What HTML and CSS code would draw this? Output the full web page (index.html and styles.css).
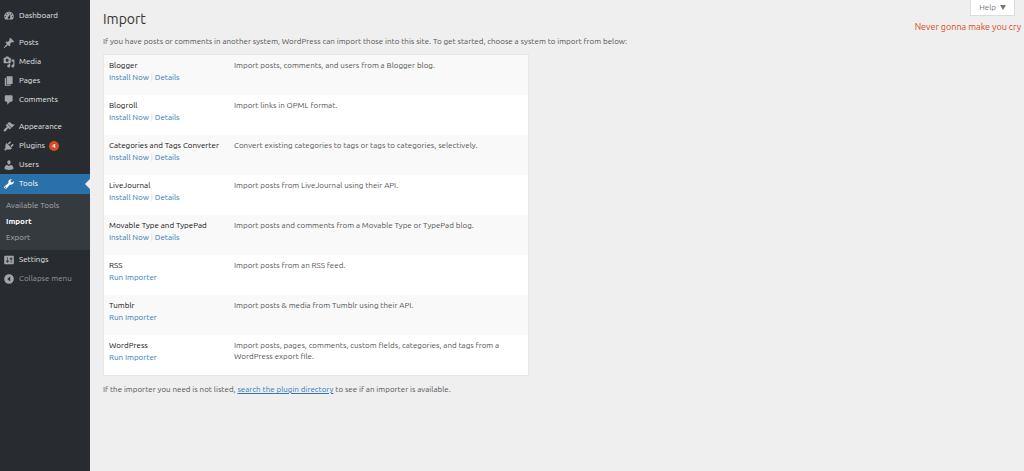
FILE: index.html
```html
<!DOCTYPE html>
<html lang="en">
<head>
  <meta charset="utf-8">
  <title>Import</title>
  <link rel="stylesheet" href="styles.css">
</head>
<body>

  <nav class="admin-menu">
    <ul class="menu">
      <li><a href="#"><svg viewBox="0 0 20 20"><path d="M3.76 16h12.48c1.1-1.37 1.76-3.11 1.76-5 0-4.42-3.58-8-8-8s-8 3.58-8 8c0 1.89.66 3.63 1.76 5zM10 4c.55 0 1 .45 1 1s-.45 1-1 1-1-.45-1-1 .45-1 1-1zM6 6c.55 0 1 .45 1 1s-.45 1-1 1-1-.45-1-1 .45-1 1-1zm8 0c.55 0 1 .45 1 1s-.45 1-1 1-1-.45-1-1 .45-1 1-1zm-5.37 5.55L12 7v6c0 1.1-.9 2-2 2s-2-.9-2-2c0-.57.24-1.08.63-1.45zM4 10c.55 0 1 .45 1 1s-.45 1-1 1-1-.45-1-1 .45-1 1-1zm12 0c.55 0 1 .45 1 1s-.45 1-1 1-1-.45-1-1 .45-1 1-1z"/></svg>Dashboard</a></li>
      <li class="separator"></li>
      <li><a href="#"><svg viewBox="0 0 20 20"><path d="M10.44 3.02l1.82-1.82 6.36 6.35-1.83 1.82c-1.05-.68-2.48-.57-3.41.36l-.75.75c-.92.93-1.04 2.35-.35 3.41l-1.83 1.82-2.41-2.41-2.8 2.79c-.42.42-3.38 2.71-3.8 2.29s1.86-3.39 2.28-3.81l2.79-2.79L4.1 9.36l1.83-1.82c1.05.69 2.48.57 3.4-.36l.75-.75c.93-.92 1.05-2.35.36-3.41z"/></svg>Posts</a></li>
      <li><a href="#"><svg viewBox="0 0 20 20"><path d="M13 11V4c0-.55-.45-1-1-1h-1.67L9 1H5L3.67 3H2c-.55 0-1 .45-1 1v7c0 .55.45 1 1 1h10c.55 0 1-.45 1-1zM7 4.5c1.38 0 2.5 1.12 2.5 2.5S8.38 9.5 7 9.5 4.5 8.38 4.5 7 5.62 4.5 7 4.5zM14 6h5v10.5c0 1.38-1.12 2.5-2.5 2.5S14 17.88 14 16.5s1.12-2.5 2.5-2.5c.17 0 .34.02.5.05V9h-3V6zm-4 8.05V13h2v3.5c0 1.38-1.12 2.5-2.5 2.5S7 17.88 7 16.5 8.12 14 9.5 14c.17 0 .34.02.5.05z"/></svg>Media</a></li>
      <li><a href="#"><svg viewBox="0 0 20 20"><path d="M6 15V2h10v13H6zm-1 1h8v2H3V5h2v11z"/></svg>Pages</a></li>
      <li><a href="#"><svg viewBox="0 0 20 20"><path d="M5 2h9c1.1 0 2 .9 2 2v7c0 1.1-.9 2-2 2h-2l-5 5v-5H5c-1.1 0-2-.9-2-2V4c0-1.1.9-2 2-2z"/></svg>Comments</a></li>
      <li class="separator"></li>
      <li><a href="#"><svg viewBox="0 0 20 20"><path d="M14.48 11.06L7.41 3.99l1.5-1.5c.5-.56 2.3-.47 3.51.32 1.21.8 1.43 1.28 2.91 2.1 1.18.64 2.45 1.26 4.45.85zm-.71.71L6.7 4.7 4.93 6.47c-.39.39-.39 1.02 0 1.41l1.06 1.06c.39.39.39 1.03 0 1.42-.6.6-1.43 1.11-2.21 1.69-.35.26-.7.53-1.01.84C1.43 14.23.4 16.08 1.4 17.07c.99 1 2.84-.03 4.18-1.36.31-.31.58-.66.85-1.02.57-.78 1.08-1.61 1.69-2.21.39-.39 1.02-.39 1.41 0l1.06 1.06c.39.39 1.02.39 1.41 0z"/></svg>Appearance</a></li>
      <li><a href="#"><svg viewBox="0 0 20 20"><path d="M13.11 4.36L9.87 7.6 8 5.73l3.24-3.24c.35-.34 1.05-.2 1.56.32.52.51.66 1.21.31 1.55zm-8 1.77l.91-1.12 9.01 9.01-1.19.84c-.71.71-2.63 1.16-3.82 1.16H6.14L4.9 17.26c-.59.59-1.54.59-2.12 0-.59-.58-.59-1.53 0-2.12l1.24-1.24v-3.88c0-1.13.4-3.19 1.09-3.89zm7.26 3.97l3.24-3.24c.34-.35 1.04-.21 1.55.31.52.51.66 1.21.31 1.55l-3.24 3.25z"/></svg>Plugins <span class="count">4</span></a></li>
      <li><a href="#"><svg viewBox="0 0 20 20"><path d="M10 9.25c-2.27 0-2.73-3.44-2.73-3.44C7 4.02 7.82 2 9.97 2c2.16 0 2.98 2.02 2.71 3.81 0 0-.41 3.44-2.68 3.44zm0 2.57L12.72 10c2.39 0 4.52 2.33 4.52 4.53v2.49s-3.65 1.13-7.24 1.13c-3.65 0-7.24-1.13-7.24-1.13v-2.49c0-2.25 1.94-4.48 4.47-4.48z"/></svg>Users</a></li>
      <li class="current">
        <a href="#"><svg viewBox="0 0 20 20"><path d="M16.68 9.77c-1.34 1.34-3.3 1.67-4.95.99l-5.41 6.52c-.99.99-2.59.99-3.58 0s-.99-2.59 0-3.57l6.52-5.42c-.68-1.65-.35-3.61.99-4.95 1.28-1.28 3.12-1.62 4.72-1.06l-2.89 2.89 2.82 2.82 2.86-2.87c.53 1.58.18 3.39-1.08 4.65zM3.81 16.21c.4.39 1.04.39 1.43 0 .4-.4.4-1.04 0-1.43-.39-.4-1.03-.4-1.43 0-.39.39-.39 1.03 0 1.43z"/></svg>Tools</a>
        <ul class="submenu">
          <li><a href="#">Available Tools</a></li>
          <li><a href="#" class="active">Import</a></li>
          <li><a href="#">Export</a></li>
        </ul>
      </li>
      <li><a href="#"><svg viewBox="0 0 20 20"><path d="M18 16V4c0-.55-.45-1-1-1H3c-.55 0-1 .45-1 1v12c0 .55.45 1 1 1h14c.55 0 1-.45 1-1zM8 11h1c.55 0 1 .45 1 1s-.45 1-1 1H8v1.5c0 .28-.22.5-.5.5s-.5-.22-.5-.5V13H6c-.55 0-1-.45-1-1s.45-1 1-1h1V5.5c0-.28.22-.5.5-.5s.5.22.5.5V11zm5-2h-1c-.55 0-1-.45-1-1s.45-1 1-1h1V5.5c0-.28.22-.5.5-.5s.5.22.5.5V7h1c.55 0 1 .45 1 1s-.45 1-1 1h-1v5.5c0 .28-.22.5-.5.5s-.5-.22-.5-.5V9z"/></svg>Settings</a></li>
      <li><button type="button" class="collapse"><svg viewBox="0 0 20 20"><path fill-rule="evenodd" d="M10 2a8 8 0 1 1 0 16 8 8 0 0 1 0-16zm2 4l-5 4 5 4V6z"/></svg>Collapse menu</button></li>
    </ul>
  </nav>

  <main class="content">
    <header class="page-header">
      <h1>Import</h1>
      <div class="header-side">
        <button type="button" class="help">Help <span class="arrow"></span></button>
        <p class="lyric">Never gonna make you cry</p>
      </div>
    </header>

    <p class="intro">If you have posts or comments in another system, WordPress can import those into this site. To get started, choose a system to import from below:</p>

    <table class="importers">
      <tbody>
        <tr>
          <td class="system"><strong>Blogger</strong><span class="actions"><a href="#">Install Now</a> | <a href="#">Details</a></span></td>
          <td class="desc">Import posts, comments, and users from a Blogger blog.</td>
        </tr>
        <tr>
          <td class="system"><strong>Blogroll</strong><span class="actions"><a href="#">Install Now</a> | <a href="#">Details</a></span></td>
          <td class="desc">Import links in OPML format.</td>
        </tr>
        <tr>
          <td class="system"><strong>Categories and Tags Converter</strong><span class="actions"><a href="#">Install Now</a> | <a href="#">Details</a></span></td>
          <td class="desc">Convert existing categories to tags or tags to categories, selectively.</td>
        </tr>
        <tr>
          <td class="system"><strong>LiveJournal</strong><span class="actions"><a href="#">Install Now</a> | <a href="#">Details</a></span></td>
          <td class="desc">Import posts from LiveJournal using their API.</td>
        </tr>
        <tr>
          <td class="system"><strong>Movable Type and TypePad</strong><span class="actions"><a href="#">Install Now</a> | <a href="#">Details</a></span></td>
          <td class="desc">Import posts and comments from a Movable Type or TypePad blog.</td>
        </tr>
        <tr>
          <td class="system"><strong>RSS</strong><span class="actions"><a href="#">Run Importer</a></span></td>
          <td class="desc">Import posts from an RSS feed.</td>
        </tr>
        <tr>
          <td class="system"><strong>Tumblr</strong><span class="actions"><a href="#">Run Importer</a></span></td>
          <td class="desc">Import posts &amp; media from Tumblr using their API.</td>
        </tr>
        <tr>
          <td class="system"><strong>WordPress</strong><span class="actions"><a href="#">Run Importer</a></span></td>
          <td class="desc">Import posts, pages, comments, custom fields, categories, and tags from a WordPress export file.</td>
        </tr>
      </tbody>
    </table>

    <p class="outro">If the importer you need is not listed, <a href="#">search the plugin directory</a> to see if an importer is available.</p>
  </main>

</body>
</html>
```
FILE: styles.css
```css
* {
  box-sizing: border-box;
}

body {
  margin: 0;
  min-height: 100vh;
  display: flex;
  background: #efefef;
  color: #555;
  font-family: Ubuntu, "Open Sans", "Noto Sans", sans-serif;
  font-size: 8px;
  line-height: 12px;
}

h1, p, ul {
  margin: 0;
  padding: 0;
  font-weight: normal;
}

ul {
  list-style: none;
}

a {
  color: #2f7cb5;
  text-decoration: none;
}

button {
  font: inherit;
  cursor: pointer;
}

/* sidebar */

.admin-menu {
  flex: 0 0 90px;
  padding-top: 6px;
  background: #282c30;
}

.menu a,
.collapse {
  display: flex;
  align-items: center;
  gap: 4px;
  width: 100%;
  height: 19px;
  padding: 0 0 0 3px;
  color: #e4e5e6;
  font-size: 8px;
}

.menu svg {
  width: 12px;
  height: 12px;
  fill: #a0a5aa;
}

.separator {
  height: 8px;
}

.count {
  width: 10px;
  height: 10px;
  border-radius: 5px;
  background: #d54e21;
  color: #fff;
  font-size: 6px;
  font-weight: bold;
  line-height: 10px;
  text-align: center;
}

.menu .current > a {
  position: relative;
  height: 20px;
  background: #2a70a9;
  color: #fff;
}

.current > a svg {
  fill: #fff;
}

/* notch pointing at the page */
.current > a::after {
  content: "";
  position: absolute;
  top: 5px;
  right: 0;
  border: 5px solid transparent;
  border-right-color: #efefef;
  border-left: 0;
}

.submenu {
  padding: 4px 0;
  background: #353a3f;
}

.submenu a {
  height: 16px;
  padding-left: 6px;
  color: #a9adb1;
}

.submenu a.active {
  color: #fff;
  font-weight: bold;
}

.collapse {
  border: 0;
  background: none;
  color: #96999c;
}

/* page */

.content {
  flex: 1;
  padding-left: 13px;
}

.page-header {
  display: flex;
  justify-content: space-between;
}

h1 {
  padding-top: 8px;
  color: #333;
  font-size: 14px;
  line-height: 22px;
}

.header-side {
  display: flex;
  flex-direction: column;
  align-items: flex-end;
  gap: 3px;
}

.help {
  display: flex;
  align-items: center;
  gap: 4px;
  height: 16px;
  margin-right: 9px;
  padding: 0 8px;
  border: 1px solid #ddd;
  border-top: 0;
  background: #fff;
  color: #777;
}

.arrow {
  border: 3px solid transparent;
  border-top: 5px solid #777;
  border-bottom: 0;
}

.lyric {
  padding-right: 3px;
  color: #d54e21;
  font-size: 9px;
  line-height: 16px;
}

.intro {
  margin: 1px 0 6px;
}

.importers {
  width: 100%;
  max-width: 426px;
  border: 1px solid #e7e7e7;
  border-spacing: 0;
  background: #fff;
  table-layout: fixed;
}

.importers tr:nth-child(odd) {
  background: #f9f9f9;
}

.importers td {
  height: 40px;
  padding: 5px;
  vertical-align: top;
}

.importers .system {
  width: 125px;
  white-space: nowrap;
}

.system strong {
  display: block;
  color: #111;
  font-weight: normal;
}

.actions {
  color: #ccc;
}

.desc {
  line-height: 11px;
}

.outro {
  margin-top: 8px;
}

.outro a {
  text-decoration: underline;
}
```
